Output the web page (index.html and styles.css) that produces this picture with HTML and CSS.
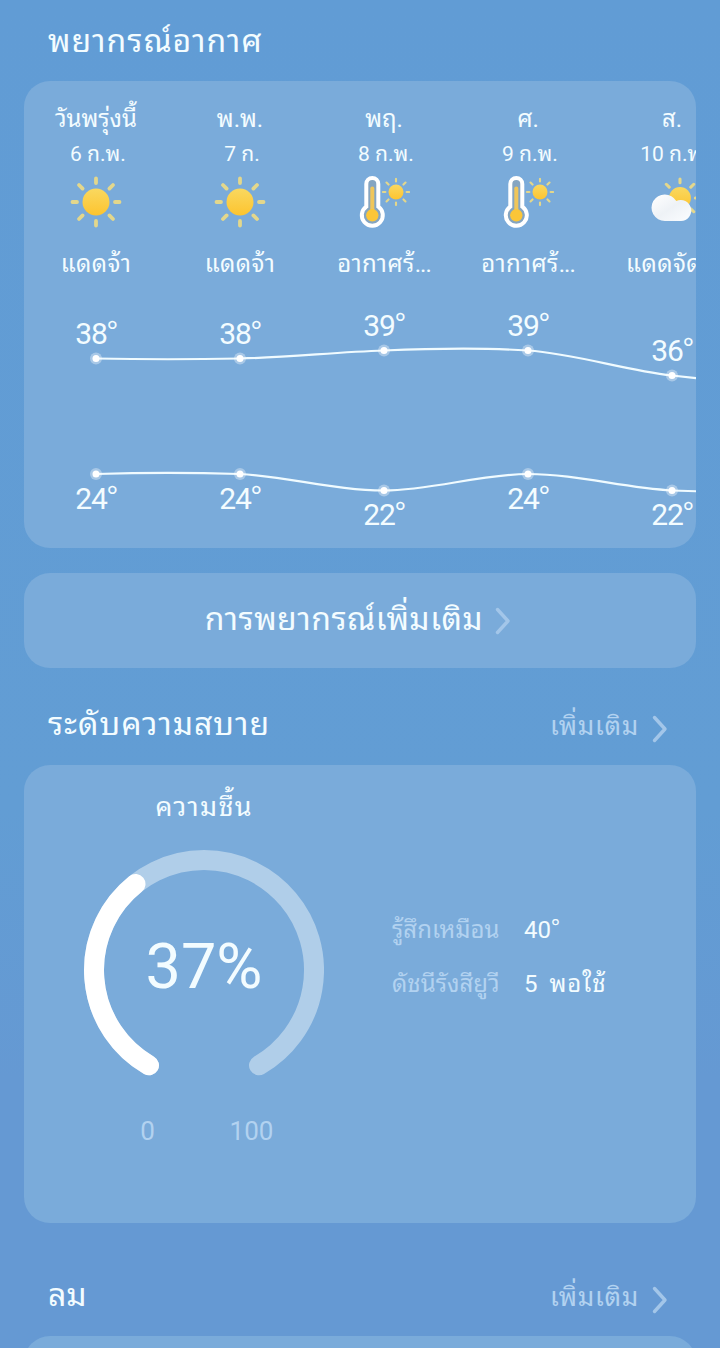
FILE: index.html
```html
<!DOCTYPE html>
<html lang="th">
<head>
  <meta charset="UTF-8">
  <meta name="viewport" content="width=device-width, initial-scale=1.0">
  <title>พยากรณ์อากาศ</title>
  <link rel="stylesheet" href="styles.css">
</head>
<body>
  <svg class="defs" width="0" height="0">
    <defs>
      <linearGradient id="sunFill" x1="0" y1="0" x2="0" y2="1">
        <stop offset="0" stop-color="#f9d860"/>
        <stop offset="1" stop-color="#fdc42f"/>
      </linearGradient>
      <linearGradient id="cloudFill" x1="0" y1="0" x2="1" y2="1">
        <stop offset="0" stop-color="#ffffff"/>
        <stop offset="0.5" stop-color="#eef2f6"/>
        <stop offset="1" stop-color="#fbfdff"/>
      </linearGradient>
      <symbol id="sun" viewBox="0 0 52 52">
        <path d="M26 2.500v4.500M26 45v4.500M2.500 26h4.500M45 26h4.500M9 9l3.600 3.600M39.400 39.400l3.600 3.600M9 43l3.600-3.600M39.400 12.600l3.600-3.600" stroke="#e3d78c" stroke-width="3.800" stroke-linecap="round"/>
        <circle cx="26" cy="26" r="13.500" fill="url(#sunFill)"/>
      </symbol>
      <symbol id="hot" viewBox="0 0 52 52">
        <path d="M8.300 30.700V8a6 6 0 0 1 12 0V30.700a10.500 10.500 0 1 1-12 0z" fill="#9a9c91" fill-opacity="0.35" stroke="#fff" stroke-width="4"/>
        <path d="M14.300 12.500v24" stroke="#f0c65a" stroke-width="4" stroke-linecap="round"/>
        <circle cx="14.300" cy="39.300" r="6.200" fill="#fbc638"/>
        <use href="#sun" x="23.500" y="1.500" width="29" height="29"/>
      </symbol>
      <symbol id="cloudy" viewBox="0 0 52 52">
        <use href="#sun" x="13" y="1" width="42" height="42"/>
        <path d="M18.800 45a13.300 13.300 0 1 1 11.500-20a10.500 10.500 0 1 1 4.700 20z" fill="url(#cloudFill)"/>
      </symbol>
      <symbol id="chevron" viewBox="0 0 16 28">
        <path d="M2.500 2.500L13 14L2.500 25.500" fill="none" stroke="currentColor" stroke-width="3.400" stroke-linecap="round" stroke-linejoin="round"/>
      </symbol>
    </defs>
  </svg>

  <main class="screen">
    <header class="section-head first">
      <h2>พยากรณ์อากาศ</h2>
    </header>

    <section class="card forecast">
      <div class="days">
        <div class="day">
          <div class="name">วันพรุ่งนี้</div>
          <div class="date">6 ก.พ.</div>
          <svg class="icon"><use href="#sun"/></svg>
          <div class="cond">แดดจ้า</div>
        </div>
        <div class="day">
          <div class="name">พ.พ.</div>
          <div class="date">7 ก.</div>
          <svg class="icon"><use href="#sun"/></svg>
          <div class="cond">แดดจ้า</div>
        </div>
        <div class="day">
          <div class="name">พฤ.</div>
          <div class="date">8 ก.พ.</div>
          <svg class="icon"><use href="#hot"/></svg>
          <div class="cond">อากาศร้<span class="dots">...</span></div>
        </div>
        <div class="day">
          <div class="name">ศ.</div>
          <div class="date">9 ก.พ.</div>
          <svg class="icon"><use href="#hot"/></svg>
          <div class="cond">อากาศร้<span class="dots">...</span></div>
        </div>
        <div class="day">
          <div class="name">ส.</div>
          <div class="date">10 ก.พ.</div>
          <svg class="icon"><use href="#cloudy"/></svg>
          <div class="cond">แดดจัด<span class="dots">...</span></div>
        </div>
      </div>
      <svg class="chart" viewBox="0 0 672 248">
        <g class="line">
          <path d="M72 58.500C120 59.500 168 59.500 216 58.500C264 57.500 312 52 360 50.500C408 48.500 456 47.500 504 50.500C552 54 600 70 648 75.500L680 79"/>
          <path d="M72 174C120 172.500 168 172.500 216 174C264 176.500 312 190.500 360 190.500C408 190.500 456 174 504 174C552 174 600 188 648 190.500L680 191.500"/>
        </g>
        <g class="halo">
          <circle cx="72" cy="58.500" r="6"/><circle cx="216" cy="58.500" r="6"/><circle cx="360" cy="50.500" r="6"/><circle cx="504" cy="50.500" r="6"/><circle cx="648" cy="75.500" r="6"/>
          <circle cx="72" cy="174" r="6"/><circle cx="216" cy="174" r="6"/><circle cx="360" cy="190.500" r="6"/><circle cx="504" cy="174" r="6"/><circle cx="648" cy="190.500" r="6"/>
        </g>
        <g class="dot">
          <circle cx="72" cy="58.500" r="3.500"/><circle cx="216" cy="58.500" r="3.500"/><circle cx="360" cy="50.500" r="3.500"/><circle cx="504" cy="50.500" r="3.500"/><circle cx="648" cy="75.500" r="3.500"/>
          <circle cx="72" cy="174" r="3.500"/><circle cx="216" cy="174" r="3.500"/><circle cx="360" cy="190.500" r="3.500"/><circle cx="504" cy="174" r="3.500"/><circle cx="648" cy="190.500" r="3.500"/>
        </g>
        <g class="temp">
          <text x="72" y="44">38<tspan class="deg">°</tspan></text>
          <text x="216" y="44">38<tspan class="deg">°</tspan></text>
          <text x="360" y="36">39<tspan class="deg">°</tspan></text>
          <text x="504" y="36">39<tspan class="deg">°</tspan></text>
          <text x="648" y="61">36<tspan class="deg">°</tspan></text>
          <text x="72" y="209">24<tspan class="deg">°</tspan></text>
          <text x="216" y="209">24<tspan class="deg">°</tspan></text>
          <text x="360" y="225">22<tspan class="deg">°</tspan></text>
          <text x="504" y="209">24<tspan class="deg">°</tspan></text>
          <text x="648" y="225">22<tspan class="deg">°</tspan></text>
        </g>
      </svg>
    </section>

    <a class="card more-forecast">
      <span>การพยากรณ์เพิ่มเติม</span>
      <svg class="chevron"><use href="#chevron"/></svg>
    </a>

    <header class="section-head">
      <h2>ระดับความสบาย</h2>
      <a class="more"><span>เพิ่มเติม</span><svg class="chevron"><use href="#chevron"/></svg></a>
    </header>

    <section class="card comfort">
      <div class="humidity">
        <div class="title">ความชื้น</div>
        <svg class="gauge" viewBox="0 0 240 240">
          <path class="track" d="M65 215.300A110 110 0 1 1 175 215.300"/>
          <path class="value" d="M65 215.300A110 110 0 0 1 51.500 34"/>
          <text x="120" y="138">37%</text>
        </svg>
        <div class="scale"><span>0</span><span>100</span></div>
      </div>
      <dl class="facts">
        <dt>รู้สึกเหมือน</dt>
        <dd>40<span class="deg">°</span></dd>
        <dt>ดัชนีรังสียูวี</dt>
        <dd>5 <span class="level">พอใช้</span></dd>
      </dl>
    </section>

    <header class="section-head wind">
      <h2>ลม</h2>
      <a class="more"><span>เพิ่มเติม</span><svg class="chevron"><use href="#chevron"/></svg></a>
    </header>

    <section class="card next"></section>
  </main>
</body>
</html>
```
FILE: styles.css
```css
* {
  box-sizing: border-box;
}
body {
  margin: 0;
  font-family: Roboto, "Noto Sans Thai Looped", "Noto Looped Thai", "Droid Sans Thai", Loma, Garuda, Waree, Umpush, "Tlwg Typo", "Leelawadee UI", "Noto Sans Thai", sans-serif;
  color: #f3fcff;
  background: #629cd4;
}
.defs {
  display: block;
}
.screen {
  height: 1348px;
  padding: 0 24px;
  overflow: hidden;
  background: linear-gradient(180deg, #619cd5 0%, #629dd4 60%, #6599d3 80%, #6599d3 100%);
}
.card {
  background: #7aabda;
  border-radius: 26px;
  overflow: hidden;
}
.section-head {
  display: flex;
  justify-content: space-between;
  height: 97px;
  padding: 0 28px 0 24px;
}
.section-head.first {
  height: 81px;
}
.section-head.wind {
  height: 113px;
}
h2 {
  margin: 0;
  padding-top: 36px;
  font-size: 32px;
  font-weight: 400;
  line-height: 40px;
  letter-spacing: 1px;
}
.first h2 {
  padding-top: 21px;
}
.wind h2 {
  padding-top: 52px;
  letter-spacing: 0;
}
.more {
  display: flex;
  gap: 13px;
  padding-top: 38px;
  font-size: 26px;
  line-height: 40px;
  letter-spacing: 0.7px;
  color: #b2d2f0;
}
.wind .more {
  padding-top: 54px;
}
.chevron {
  width: 16px;
  height: 28px;
  color: #a3c6e9;
}
.more .chevron {
  margin-top: 9px;
}

/* forecast */
.forecast {
  height: 467px;
}
.days {
  display: flex;
  height: 219px;
}
.day {
  flex: 0 0 144px;
  display: flex;
  flex-direction: column;
  align-items: center;
  padding-top: 22px;
  white-space: nowrap;
}
.name {
  font-size: 24px;
  line-height: 32px;
}
.date {
  padding-left: 4px;
  font-size: 21px;
  line-height: 32px;
  margin-top: 3px;
}
.icon {
  width: 52px;
  height: 52px;
  margin-top: 6px;
}
.cond {
  margin-top: 20px;
  font-size: 24px;
  line-height: 32px;
  letter-spacing: 0.4px;
}
.dots {
  letter-spacing: -1px;
}
.chart {
  display: block;
  width: 672px;
  height: 248px;
}
.line {
  fill: none;
  stroke: #f0fbff;
  stroke-width: 2.2;
}
.halo {
  fill: #fff;
  fill-opacity: 0.35;
}
.dot {
  fill: #fff;
}
.temp {
  fill: #f3fcff;
  font-size: 30px;
  letter-spacing: -1.2px;
  text-anchor: middle;
}
.deg {
  font-family: "Noto Sans";
  font-size: 0.87em;
  line-height: 0;
  vertical-align: 4px;
  baseline-shift: 4px;
}

.more-forecast {
  display: flex;
  justify-content: center;
  gap: 12px;
  height: 95px;
  margin-top: 25px;
  padding: 26px 4px 0 0;
  font-size: 32px;
  line-height: 40px;
  letter-spacing: 0.5px;
}
.more-forecast .chevron {
  margin-top: 8px;
}

/* comfort */
.comfort {
  display: flex;
  height: 458px;
}
.humidity {
  display: flex;
  flex-direction: column;
  align-items: center;
  width: 360px;
  padding-top: 24px;
}
.title {
  font-size: 27px;
  line-height: 36px;
  letter-spacing: 1.3px;
}
.gauge {
  width: 240px;
  height: 240px;
  margin-top: 25px;
}
.track,
.value {
  fill: none;
  stroke: #b0cee9;
  stroke-width: 20;
  stroke-linecap: round;
}
.value {
  stroke: #fff;
}
.gauge text {
  fill: #f3fcff;
  font-size: 63px;
  text-anchor: middle;
}
.scale {
  display: flex;
  margin: 25px 9px 0 0;
  font-size: 26px;
  line-height: 32px;
  color: #b2d2f0;
}
.scale span {
  width: 104px;
  text-align: center;
}
.facts {
  display: grid;
  grid-template-columns: 132px auto;
  grid-auto-rows: 54px;
  margin: 138px 0 0 8px;
  font-size: 24px;
  line-height: 54px;
}
.facts dt {
  color: #b2d2f0;
}
.facts dd {
  margin: 0;
}
.level {
  margin-left: 6px;
  letter-spacing: 1px;
}
.next {
  height: 120px;
}
```
